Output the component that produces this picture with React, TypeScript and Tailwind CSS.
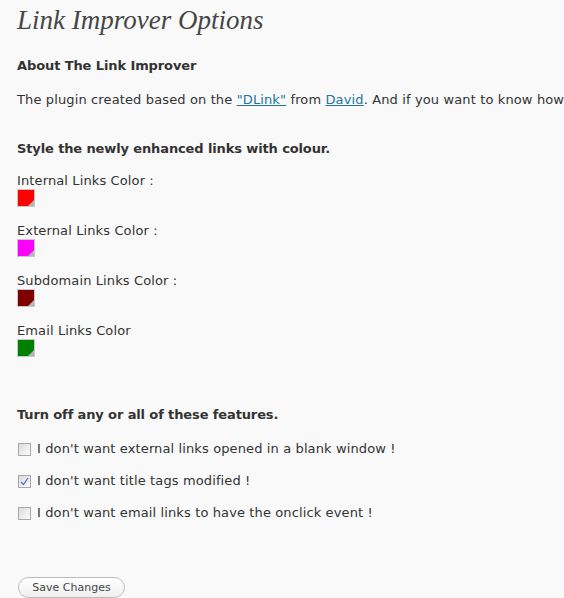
import React from "react";

const verdana = { fontFamily: '"DejaVu Sans", Verdana, sans-serif' };

function Swatch({ color }: { color: string }) {
  return (
    <div className="relative mt-0 h-[18px] w-[18px] border border-[#c8c8c8] bg-white p-0">
      <div className="h-full w-full" style={{ background: color }} />
      <div className="absolute bottom-0 right-0 h-0 w-0 border-b-[6px] border-l-[6px] border-b-[#b4b4b4] border-l-transparent" />
    </div>
  );
}

function Check({ checked, label }: { checked?: boolean; label: string }) {
  return (
    <label className="flex h-[20px] items-center gap-[6px] text-[13px] leading-[20px] tracking-[0.12px] text-[#333]">
      <span className="relative ml-[1px] flex h-[13px] w-[13px] items-center justify-center border border-[#a9a9a9] bg-gradient-to-br from-[#dcdcdc] to-[#fbfbfb]">
        {checked && (
          <svg width="9" height="9" viewBox="0 0 9 9" className="absolute">
            <path d="M1 5 L3.5 7.5 L8 1" fill="none" stroke="#4a6fd4" strokeWidth="1.3" />
          </svg>
        )}
      </span>
      <span>{label}</span>
    </label>
  );
}

export default function App() {
  const groups = [
    { label: "Internal Links Color :", color: "#ff0000" },
    { label: "External Links Color :", color: "#ff00ff" },
    { label: "Subdomain Links Color :", color: "#800000" },
    { label: "Email Links Color", color: "#008000" },
  ];
  return (
    <div className="h-[598px] w-[564px] overflow-hidden bg-[#f9f9f9] pl-[17px] text-[#333]" style={verdana}>
      <h2
        className="h-[39px] whitespace-nowrap text-[27px] italic leading-[40px] text-[#464646]"
        style={{ fontFamily: '"Liberation Serif", Georgia, serif' }}
      >
        Link Improver Options
      </h2>
      <h3 className="mt-[18px] text-[13px] font-bold leading-[18px] tracking-[-0.1px] text-[#333]">About The Link Improver</h3>
      <p className="mt-[16px] whitespace-nowrap text-[13px] leading-[18px] tracking-[0.13px]">
        The plugin created based on the{" "}
        <a className="text-[#21759b] underline" href="#">
          "DLink"
        </a>{" "}
        from{" "}
        <a className="text-[#21759b] underline" href="#">
          David
        </a>
        . And if you want to know how
      </p>
      <h3 className="mt-[31px] text-[13px] font-bold leading-[18px] tracking-[-0.12px]">Style the newly enhanced links with colour.</h3>
      <div className="mt-[15px] flex flex-col gap-[16px]">
        {groups.map((g) => (
          <div key={g.label} className="flex flex-col items-start">
            <div className="text-[13px] leading-[16px] tracking-[0.12px]">{g.label}</div>
            <Swatch color={g.color} />
          </div>
        ))}
      </div>
      <h3 className="mt-[49px] text-[13px] font-bold leading-[18px] tracking-[-0.12px]">Turn off any or all of these features.</h3>
      <div className="mt-[15px] flex flex-col gap-[12px]">
        <Check label="I don't want external links opened in a blank window !" />
        <Check checked label="I don't want title tags modified !" />
        <Check label="I don't want email links to have the onclick event !" />
      </div>
      <button className="ml-[1px] mt-[54px] h-[21px] w-[107px] rounded-full border border-[#bbb] bg-gradient-to-b from-white to-[#efefef] text-[11px] leading-[19px] text-[#464646]">
        Save Changes
      </button>
    </div>
  );
}
